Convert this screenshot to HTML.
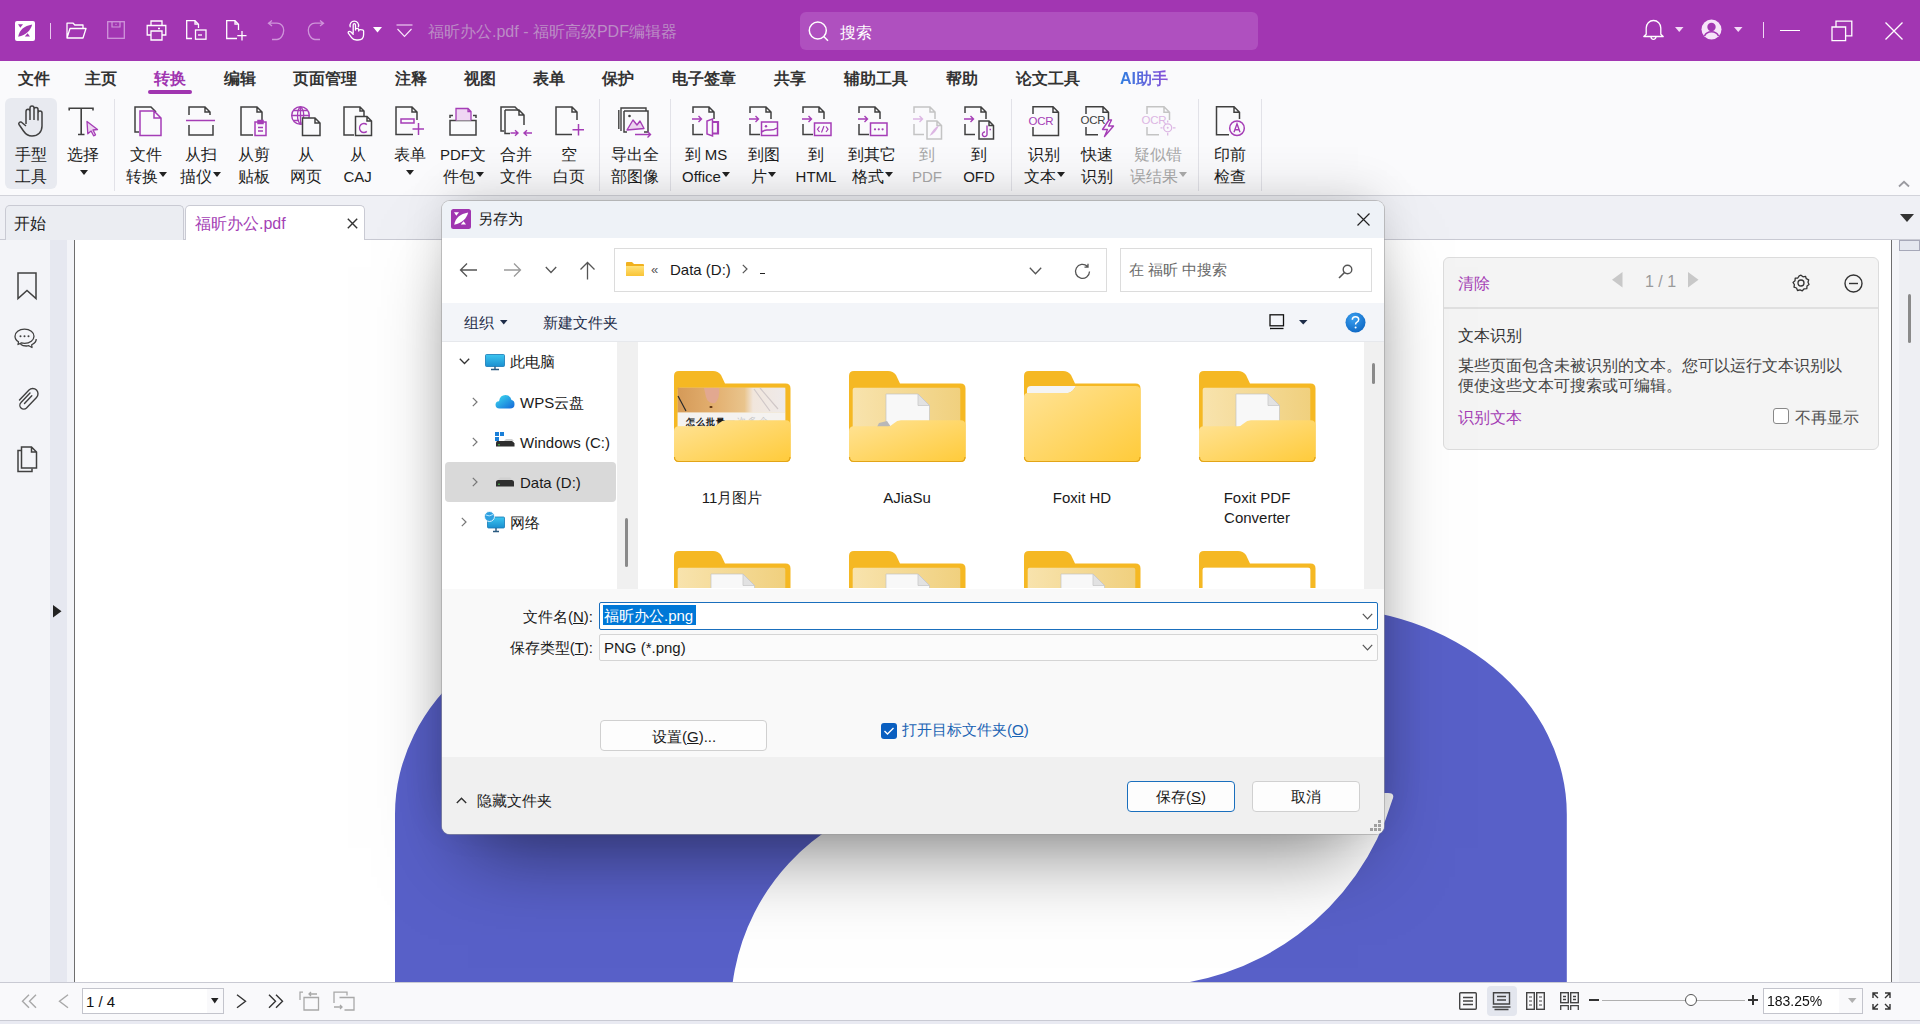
<!DOCTYPE html>
<html><head><meta charset="utf-8"><style>
*{margin:0;padding:0;box-sizing:border-box}
html,body{width:1920px;height:1024px;overflow:hidden;background:#fff;font-family:"Liberation Sans",sans-serif;color:#222}
.a{position:absolute}
svg{position:absolute;overflow:visible}
.t{position:absolute;white-space:nowrap;line-height:1}
.ri{position:absolute;top:144px;width:80px;text-align:center;font-size:16px;line-height:22px;color:#1e1e1e;white-space:nowrap}
.ri.dis{color:#a8a8a8}
.car{display:inline-block;width:0;height:0;border-left:4.5px solid transparent;border-right:4.5px solid transparent;border-top:5px solid #222;vertical-align:middle;margin-left:1px;position:relative;top:-3px}
.dis .car{border-top-color:#aaa}
.lt{font-size:15px}
.sep{position:absolute;top:99px;width:1px;height:92px;background:#e2e2e8}
.mi{position:absolute;top:70px;font-size:16px;line-height:18px;color:#333;white-space:nowrap;font-weight:bold;letter-spacing:0px}
</style></head><body>
<div class="a" style="left:0;top:0;width:1920px;height:61px;background:#a236b2"></div>
<svg style="left:15px;top:21px" width="20" height="20" viewBox="0 0 20 20" ><rect x="0" y="0" width="20" height="20" rx="2" fill="#fff"/><path d="M3 3.2H8L5.3 6.8Z" fill="#a236b2"/><path d="M3.2 15.8C4.5 9 9 5 17.2 3.6C15.5 10 11 14 3.2 15.8Z" fill="#a236b2"/><path d="M9.8 15.6H15L12.6 12.2Z" fill="#a236b2"/></svg>
<div class="a" style="left:50px;top:23px;width:1px;height:16px;background:#e8c8ee"></div>
<svg style="left:66px;top:21px" width="21" height="19" viewBox="0 0 21 19" ><path d="M1 17V2.2H7.2L8.8 4H17V7 M1 17L4 7.5H20L17 17Z" fill="none" stroke="#fff" stroke-width="1.3" stroke-linejoin="round"/></svg>
<svg style="left:107px;top:21px" width="18" height="18" viewBox="0 0 18 18" ><rect x="0.7" y="0.7" width="16.6" height="16.6" fill="none" stroke="#cf95da" stroke-width="1.3"/><path d="M5 1V6H13V1 M8.5 3.3H9.5" fill="none" stroke="#cf95da" stroke-width="1.2"/></svg>
<svg style="left:146px;top:20px" width="21" height="21" viewBox="0 0 21 21" ><path d="M5 5V1H16V5 M5 15H1.2V5.5H19.8V15H16 M5 11H16V20H5Z M12 8.5H14" fill="none" stroke="#fff" stroke-width="1.3"/></svg>
<svg style="left:186px;top:20px" width="21" height="20" viewBox="0 0 21 20" ><path d="M6 18.5H0.7V0.7H9L12.5 4.2V8 M9 0.7V4.2H12.5" fill="none" stroke="#fff" stroke-width="1.3"/><rect x="9.5" y="10" width="10.5" height="9.2" fill="none" stroke="#fff" stroke-width="1.3"/><path d="M12 15H16" stroke="#fff" stroke-width="1.3"/></svg>
<svg style="left:226px;top:20px" width="21" height="21" viewBox="0 0 21 21" ><path d="M11 18.5H0.7V0.7H9L12.5 4.2V10 M9 0.7V4.2H12.5 M16 11V20.5 M11.3 15.7H20.5" fill="none" stroke="#fff" stroke-width="1.3"/></svg>
<svg style="left:267px;top:20px" width="18" height="21" viewBox="0 0 18 21" ><path d="M1.5 3.2H10C14 3.2 16.7 6.3 16.7 10.2C16.7 14.2 14 19.5 10 19.5H5 M5 0.5L1.5 3.2L5 6" fill="none" stroke="#cf95da" stroke-width="1.3"/></svg>
<svg style="left:307px;top:20px" width="18" height="21" viewBox="0 0 18 21" ><path d="M16.5 3.2H8C4 3.2 1.3 6.3 1.3 10.2C1.3 14.2 4 19.5 8 19.5H13 M13 0.5L16.5 3.2L13 6" fill="none" stroke="#cf95da" stroke-width="1.3"/></svg>
<svg style="left:347px;top:20px" width="18" height="21" viewBox="0 0 18 21" ><path d="M3.2 6.8A4.3 4.3 0 1 1 11.4 6.8 M6.2 13V5Q6.2 3.6 7.3 3.6Q8.5 3.6 8.5 5V10 M8.5 10V9.6Q8.5 8.3 10 8.3Q11.7 8.3 11.7 9.6V11 M11.7 11V10.8Q11.7 9.6 13.3 9.6Q16.6 9.6 16.6 11V14.8Q16.6 20 11 20H9.5Q6.2 20 4.6 17.6L1.3 13.2Q0.8 12.2 1.7 11.6Q2.7 11 3.7 11.8L6.2 14.2" fill="none" stroke="#fff" stroke-width="1.3" stroke-linejoin="round" stroke-linecap="round"/></svg>
<svg style="left:373px;top:27px" width="9" height="6" viewBox="0 0 9 6" ><path d="M0 0H9L4.5 5.5Z" fill="#fff"/></svg>
<svg style="left:396px;top:24px" width="17" height="14" viewBox="0 0 17 14" ><path d="M0.5 1H16.5 M1.5 5L8.5 12.5L15.5 5" fill="none" stroke="#fae8fc" stroke-width="1.1"/></svg>
<div class="t" style="left:428px;top:24px;font-size:16px;color:#bb8cc5;line-height:16px">福昕办公.pdf - 福昕高级PDF编辑器</div>
<div class="a" style="left:800px;top:12px;width:458px;height:38px;border-radius:6px;background:#af50bf"></div>
<svg style="left:808px;top:21px" width="22" height="21" viewBox="0 0 22 21" ><circle cx="9.8" cy="9.5" r="8.5" fill="none" stroke="#fff" stroke-width="1.5"/><path d="M15.8 15.5L20 19.8" stroke="#fff" stroke-width="1.5"/></svg>
<div class="t" style="left:840px;top:24.5px;font-size:16px;color:#fff;line-height:16px">搜索</div>
<svg style="left:1643px;top:19px" width="21" height="21" viewBox="0 0 21 21" ><path d="M3.2 15.3V9C3.2 5 6.3 1.5 10.5 1.5C14.7 1.5 17.8 5 17.8 9V15.3L20.2 17.5H0.8Z M8 17.8A2.5 2.5 0 0 0 13 17.8" fill="none" stroke="#fff" stroke-width="1.3" stroke-linejoin="round"/></svg>
<svg style="left:1675px;top:27px" width="9" height="6" viewBox="0 0 9 6" ><path d="M0 0H8.5L4.25 5Z" fill="#f3dcf7"/></svg>
<svg style="left:1701px;top:19px" width="22" height="21" viewBox="0 0 22 21" ><circle cx="10.5" cy="10.5" r="10" fill="#f6e4f9"/><circle cx="10.5" cy="8" r="4.2" fill="#a236b2"/><path d="M3.5 17C5 13.8 7.5 12.8 10.5 12.8C13.5 12.8 16 13.8 17.5 17" fill="none" stroke="#a236b2" stroke-width="1.6"/></svg>
<svg style="left:1734px;top:27px" width="9" height="6" viewBox="0 0 9 6" ><path d="M0 0H8.5L4.25 5Z" fill="#f3dcf7"/></svg>
<div class="a" style="left:1763px;top:22px;width:1.3px;height:16px;background:#f0d8f4"></div>
<div class="a" style="left:1780px;top:29.5px;width:20px;height:1.3px;background:#fff"></div>
<svg style="left:1831px;top:20px" width="22" height="22" viewBox="0 0 22 22" ><path d="M1 7H14.6V20.6H1Z M5 7V1.2H20.8V15.8H14.6" fill="none" stroke="#fff" stroke-width="1.3"/></svg>
<svg style="left:1885px;top:22px" width="18" height="18" viewBox="0 0 18 18" ><path d="M0.5 0.5L17.5 17.5 M17.5 0.5L0.5 17.5" stroke="#fff" stroke-width="1.3"/></svg>
<div class="a" style="left:0;top:61px;width:1920px;height:134px;background:#fafafc"></div>
<div class="a" style="left:0;top:195px;width:1920px;height:1px;background:#d2d3da"></div>
<div class="mi" style="left:17.0px;width:34px;text-align:center;color:#333">文件</div>
<div class="mi" style="left:84.0px;width:34px;text-align:center;color:#333">主页</div>
<div class="mi" style="left:153.0px;width:34px;text-align:center;color:#a035b0">转换</div>
<div class="mi" style="left:222.5px;width:34px;text-align:center;color:#333">编辑</div>
<div class="mi" style="left:291.0px;width:68px;text-align:center;color:#333">页面管理</div>
<div class="mi" style="left:394.0px;width:34px;text-align:center;color:#333">注释</div>
<div class="mi" style="left:463.0px;width:34px;text-align:center;color:#333">视图</div>
<div class="mi" style="left:532.0px;width:34px;text-align:center;color:#333">表单</div>
<div class="mi" style="left:601.0px;width:34px;text-align:center;color:#333">保护</div>
<div class="mi" style="left:670.0px;width:68px;text-align:center;color:#333">电子签章</div>
<div class="mi" style="left:773.0px;width:34px;text-align:center;color:#333">共享</div>
<div class="mi" style="left:842.0px;width:68px;text-align:center;color:#333">辅助工具</div>
<div class="mi" style="left:945.0px;width:34px;text-align:center;color:#333">帮助</div>
<div class="mi" style="left:1013.5px;width:68px;text-align:center;color:#333">论文工具</div>
<div class="mi" style="left:1120px;width:48px;background:linear-gradient(90deg,#2f7ee0,#8a4fd8);-webkit-background-clip:text;background-clip:text;color:transparent">AI助手</div>
<div class="a" style="left:148px;top:90px;width:44px;height:4px;border-radius:2px;background:#a035b0"></div>
<div class="a" style="left:5px;top:98px;width:52px;height:91px;border-radius:6px;background:#e8eaf0"></div>
<div class="sep" style="left:114.0px"></div>
<div class="sep" style="left:599.0px"></div>
<div class="sep" style="left:669.5px"></div>
<div class="sep" style="left:1011.0px"></div>
<div class="sep" style="left:1198.0px"></div>
<div class="sep" style="left:1260.5px"></div>
<div class="ri" style="left:-9px">手型<br>工具</div>
<div class="ri" style="left:43px">选择<br><span class="car" style="top:-5px"></span></div>
<div class="ri" style="left:106px">文件<br>转换<span class="car"></span></div>
<div class="ri" style="left:160.5px">从扫<br>描仪<span class="car"></span></div>
<div class="ri" style="left:213.5px">从剪<br>贴板</div>
<div class="ri" style="left:266px">从<br>网页</div>
<div class="ri" style="left:317.6px">从<br><span class="lt">CAJ</span></div>
<div class="ri" style="left:369.7px">表单<br><span class="car" style="top:-5px"></span></div>
<div class="ri" style="left:423px"><span class="lt">PDF</span>文<br>件包<span class="car"></span></div>
<div class="ri" style="left:476px">合并<br>文件</div>
<div class="ri" style="left:529px">空<br>白页</div>
<div class="ri" style="left:595px">导出全<br>部图像</div>
<div class="ri" style="left:666px">到<span class="lt"> MS</span><br><span class="lt">Office</span><span class="car"></span></div>
<div class="ri" style="left:723.6px">到图<br>片<span class="car"></span></div>
<div class="ri" style="left:776px">到<br><span class="lt">HTML</span></div>
<div class="ri" style="left:832px">到其它<br>格式<span class="car"></span></div>
<div class="ri dis" style="left:887px">到<br><span class="lt">PDF</span></div>
<div class="ri" style="left:939px">到<br><span class="lt">OFD</span></div>
<div class="ri" style="left:1004px">识别<br>文本<span class="car"></span></div>
<div class="ri" style="left:1057px">快速<br>识别</div>
<div class="ri dis" style="left:1118px">疑似错<br>误结果<span class="car"></span></div>
<div class="ri" style="left:1190px">印前<br>检查</div>
<svg style="left:17px;top:105px" width="30" height="32" viewBox="0 0 30 32" ><path d="M9 19V6.5C9 5 10 4.2 11 4.2C12 4.2 13 5 13 6.5V15 M13 15V3C13 1.7 14 1 15 1C16 1 17 1.7 17 3V15 M17 15V4.5C17 3.2 18 2.5 19 2.5C20 2.5 21 3.2 21 4.5V15.5 M21 15.5V8C21 6.7 22 6 23 6C24 6 25 6.7 25 8V21C25 27 21 31 15 31C11 31 8.5 29 6.5 26L2 19.5C1.2 18.2 2.8 16.2 4.5 17.2L9 21" fill="none" stroke="#404040" stroke-width="1.5" stroke-linejoin="round"/></svg>
<svg style="left:68px;top:106px" width="32" height="32" viewBox="0 0 32 32" ><path d="M1.2 4.5V2.3H25V4.5 M13.2 2.3V28.5 M10 28.5H16.5" fill="none" stroke="#404040" stroke-width="1.6"/><path d="M19 15.5L29.5 23.5L25 24L27.5 28.8L25.6 29.8L23.1 25L19.8 27.8Z" fill="#ecd3f0" stroke="#a53db6" stroke-width="1.3" stroke-linejoin="round"/></svg>
<svg style="left:134px;top:106px" width="28" height="30" viewBox="0 0 28 30" ><path d="M5 26H1V1H17L22 6" fill="none" stroke="#404040" stroke-width="1.5"/><path d="M6 5H20L27 12V29.5H6Z M20 5V12H27" fill="none" stroke="#a53db6" stroke-width="1.5"/></svg>
<svg style="left:186px;top:106px" width="30" height="30" viewBox="0 0 30 30" ><path d="M3 9V1H19L24 6V9 M19 1V6H24 M3 19V29H27V19" fill="none" stroke="#404040" stroke-width="1.5"/><path d="M0 14.5H29" stroke="#a53db6" stroke-width="1.5"/></svg>
<svg style="left:240px;top:106px" width="28" height="30" viewBox="0 0 28 30" ><path d="M13 29H1V1H17L22 6V14 M17 1V6H22" fill="none" stroke="#404040" stroke-width="1.5"/><path d="M15 16H26V29.5H15Z M18 14.5H23V17.5H18Z M18 21.5H23 M18 25H23" fill="none" stroke="#a53db6" stroke-width="1.5"/></svg>
<svg style="left:291px;top:106px" width="30" height="30" viewBox="0 0 30 30" ><circle cx="9.5" cy="9.5" r="8.8" fill="none" stroke="#a53db6" stroke-width="1.4"/><path d="M0.7 9.5H18.3 M9.5 0.7V18.3 M2.5 4.5H16.5 M2.5 14.5H8 M9.5 0.7C5.5 4 5.5 15 9.5 18.3 M9.5 0.7C13.5 4 13.5 12 11 17" fill="none" stroke="#a53db6" stroke-width="1.3"/><path d="M11.5 12H24L29 17V29.5H11.5Z M24 12V17H29" fill="#fafafc" stroke="#404040" stroke-width="1.5"/></svg>
<svg style="left:343px;top:106px" width="29" height="30" viewBox="0 0 29 30" ><path d="M11 29H1V1H17L21 5V10 M17 1V5H21" fill="none" stroke="#404040" stroke-width="1.5"/><path d="M12.5 10.5H24L28.5 15V29.5H12.5Z M24 10.5V15H28.5" fill="none" stroke="#404040" stroke-width="1.5"/><path d="M23.8 18.6A4.3 4.6 0 1 0 23.8 25.4" fill="none" stroke="#a53db6" stroke-width="1.5"/></svg>
<svg style="left:395px;top:106px" width="30" height="30" viewBox="0 0 30 30" ><path d="M18 28.5H1V1H17L22 6V14 M17 1V6H22" fill="none" stroke="#404040" stroke-width="1.5"/><path d="M6 13H19V17H6Z M23.5 17V29 M17.5 23H29" fill="none" stroke="#a53db6" stroke-width="1.5"/></svg>
<svg style="left:449px;top:106px" width="28" height="30" viewBox="0 0 28 30" ><path d="M1 12V9.5H4 M24 9.5H27V12 M1 14.5H27V29H1Z" fill="none" stroke="#404040" stroke-width="1.5"/><path d="M7 14.5V2.5H19L22 5.5V14.5 M19 2.5V5.5H22" fill="#efd6f3" stroke="#a53db6" stroke-width="1.3"/></svg>
<svg style="left:500px;top:106px" width="33" height="30" viewBox="0 0 33 30" ><path d="M4 25H1V1H15L19 5" fill="none" stroke="#404040" stroke-width="1.5"/><path d="M5 4H19L24 9V19 M19 4V9H24 M5 4V27.5H10" fill="none" stroke="#404040" stroke-width="1.5"/><path d="M10.5 27H18 M15 24.3L18 27L15 29.7 M32 27H24 M27 24.3L24 27L27 29.7" fill="none" stroke="#a53db6" stroke-width="1.4"/></svg>
<svg style="left:555px;top:106px" width="29" height="30" viewBox="0 0 29 30" ><path d="M17 28.5H1V1H17L22 6V14 M17 1V6H22" fill="none" stroke="#404040" stroke-width="1.5"/><path d="M23.5 18V29.5 M17.5 23.7H29" fill="none" stroke="#a53db6" stroke-width="1.5"/></svg>
<svg style="left:618px;top:106px" width="34" height="30" viewBox="0 0 34 30" ><path d="M3 25V2H28V5 M0.8 23V4" fill="none" stroke="#404040" stroke-width="1.4"/><path d="M6 5H30V26H26 M6 5V26H9" fill="none" stroke="#404040" stroke-width="1.5"/><path d="M9 24L15 14L19 19L22 15L26 22.5Z" fill="#ecd3f0" stroke="#a53db6" stroke-width="1.4" stroke-linejoin="round"/><circle cx="11.5" cy="10" r="1.3" fill="#404040"/><path d="M17 28.5H32.5 M29.5 25.5L32.5 28.5L29.5 31.5" fill="none" stroke="#a53db6" stroke-width="1.4"/></svg>
<svg style="left:692px;top:106px" width="30" height="34" viewBox="0 0 30 34" ><path d="M1 7V1H17L22 6V13 M17 1V6H22 M1 18V28.5H11" fill="none" stroke="#404040" stroke-width="1.5"/><path d="M0 13H9.5 M6.5 10L9.5 13L6.5 16" fill="none" stroke="#a53db6" stroke-width="1.4"/><path d="M15 15V28L20.5 30V13Z" fill="none" stroke="#a53db6" stroke-width="1.5"/><path d="M20 16H26V27.5H20" fill="none" stroke="#a53db6" stroke-width="2.2"/></svg>
<svg style="left:749px;top:106px" width="30" height="34" viewBox="0 0 30 34" ><path d="M1 7V1H17L22 6V13 M17 1V6H22 M1 18V28.5H11" fill="none" stroke="#404040" stroke-width="1.5"/><path d="M0 13H9.5 M6.5 10L9.5 13L6.5 16" fill="none" stroke="#a53db6" stroke-width="1.4"/><path d="M12.5 16H28.5V29.5H12.5Z M13 26C17 21 21 27 28 22" fill="none" stroke="#a53db6" stroke-width="1.5"/><circle cx="17" cy="20.3" r="1.2" fill="#a53db6"/></svg>
<svg style="left:802px;top:106px" width="30" height="34" viewBox="0 0 30 34" ><path d="M1 7V1H17L22 6V13 M17 1V6H22 M1 18V28.5H11" fill="none" stroke="#404040" stroke-width="1.5"/><path d="M0 13H9.5 M6.5 10L9.5 13L6.5 16" fill="none" stroke="#a53db6" stroke-width="1.4"/><path d="M12.5 17H29V29.5H12.5Z" fill="none" stroke="#a53db6" stroke-width="1.5"/><path d="M17.5 20.5L15.5 23.3L17.5 26 M24 20.5L26 23.3L24 26 M22 20L19.5 26.5" fill="none" stroke="#a53db6" stroke-width="1.2"/></svg>
<svg style="left:858px;top:106px" width="30" height="34" viewBox="0 0 30 34" ><path d="M1 7V1H17L22 6V13 M17 1V6H22 M1 18V28.5H11" fill="none" stroke="#404040" stroke-width="1.5"/><path d="M0 13H9.5 M6.5 10L9.5 13L6.5 16" fill="none" stroke="#a53db6" stroke-width="1.4"/><path d="M12.5 17H29V29.5H12.5Z" fill="none" stroke="#a53db6" stroke-width="1.5"/><circle cx="17" cy="23.3" r="1.1" fill="#a53db6"/><circle cx="20.8" cy="23.3" r="1.1" fill="#a53db6"/><circle cx="24.6" cy="23.3" r="1.1" fill="#a53db6"/></svg>
<svg style="left:913px;top:106px" width="30" height="34" viewBox="0 0 30 34" ><path d="M1 7V1H17L22 6V13 M17 1V6H22 M1 18V28.5H11" fill="none" stroke="#c4c4c4" stroke-width="1.5"/><path d="M0 13H9.5 M6.5 10L9.5 13L6.5 16" fill="none" stroke="#dcb6e3" stroke-width="1.4"/><path d="M14 15H24L28.5 19.5V33H14Z M24 15V19.5H28.5" fill="none" stroke="#c4c4c4" stroke-width="1.5"/><path d="M16.5 30C19 25 22 21 26 19.5C24 24 21 28 16.5 30Z" fill="#dcb6e3"/></svg>
<svg style="left:964px;top:106px" width="30" height="34" viewBox="0 0 30 34" ><path d="M1 7V1H17L22 6V13 M17 1V6H22 M1 18V28.5H11" fill="none" stroke="#404040" stroke-width="1.5"/><path d="M0 13H9.5 M6.5 10L9.5 13L6.5 16" fill="none" stroke="#a53db6" stroke-width="1.4"/><path d="M15 15H25L29.5 19.5V33H15Z M25 15V19.5H29.5" fill="none" stroke="#404040" stroke-width="1.5"/><path d="M23 19.5V28.5A2.3 2.3 0 1 1 21 26 M25.5 23.5H27" fill="none" stroke="#a53db6" stroke-width="1.4"/></svg>
<svg style="left:1028px;top:106px" width="32" height="31" viewBox="0 0 32 31" ><path d="M5 8V0.8H25L30.5 6.3V29.5H5V21 M25 0.8V6.3H30.5" fill="none" stroke="#404040" stroke-width="1.5"/><rect x="0" y="9" width="27" height="11" fill="#fafafc"/><text x="0.5" y="19.2" font-family="Liberation Sans" font-size="11.5" fill="#a53db6" letter-spacing="-0.3">OCR</text></svg>
<svg style="left:1080px;top:106px" width="35" height="31" viewBox="0 0 35 31" ><path d="M6 8V0.8H23L28.5 6.3V14 M23 0.8V6.3H28.5 M6 21V28.8H18" fill="none" stroke="#404040" stroke-width="1.5"/><rect x="0" y="8" width="27" height="11" fill="#fafafc"/><text x="0.5" y="17.8" font-family="Liberation Sans" font-size="11.5" fill="#404040" letter-spacing="-0.3">OCR</text><path d="M29 14L22.5 23.5H27.5L24.5 30.5L33.5 20H28.5L31.5 14Z" fill="none" stroke="#a53db6" stroke-width="1.4" stroke-linejoin="round"/></svg>
<svg style="left:1141px;top:106px" width="35" height="31" viewBox="0 0 35 31" ><path d="M6 8V0.8H23L28.5 6.3V14 M23 0.8V6.3H28.5 M6 21V28.8H18" fill="none" stroke="#c4c4c4" stroke-width="1.5"/><rect x="0" y="8" width="27" height="11" fill="#fafafc"/><text x="0.5" y="17.8" font-family="Liberation Sans" font-size="11.5" fill="#dcb6e3" letter-spacing="-0.3">OCR</text><circle cx="26.7" cy="21.8" r="4" fill="none" stroke="#dcb6e3" stroke-width="1.3"/><path d="M26.7 14.5V16.5 M26.7 27V29.5 M19.5 21.8H21.5 M32 21.8H34.5" stroke="#dcb6e3" stroke-width="1.3"/><circle cx="26.7" cy="21.8" r="1" fill="#dcb6e3"/></svg>
<svg style="left:1215px;top:106px" width="31" height="31" viewBox="0 0 31 31" ><path d="M14 28.8H1.5V0.8H19L24.5 6.3V13 M19 0.8V6.3H24.5" fill="none" stroke="#404040" stroke-width="1.5"/><circle cx="22" cy="22.2" r="7.3" fill="none" stroke="#a53db6" stroke-width="1.5"/><path d="M19 26.3L22 17.8L25 26.3 M20 23.7H24" fill="none" stroke="#a53db6" stroke-width="1.4"/></svg>
<svg style="left:1898px;top:180px" width="12" height="8" viewBox="0 0 12 8" ><path d="M1 6.5L6 1.8L11 6.5" fill="none" stroke="#9a9aa0" stroke-width="1.8"/></svg>
<div class="a" style="left:0;top:196px;width:1920px;height:44px;background:#eff0f5"></div>
<div class="a" style="left:0;top:239px;width:1920px;height:1px;background:#c9cad3"></div>
<div class="a" style="left:5px;top:205px;width:179px;height:35px;background:#ebedf2;border:1px solid #c9cad3;border-bottom:none;border-radius:5px 5px 0 0"></div>
<div class="t" style="left:14px;top:216px;font-size:16px;color:#222;line-height:16px">开始</div>
<div class="a" style="left:185px;top:205px;width:180px;height:35px;background:#fff;border:1px solid #c9cad3;border-bottom:none;border-radius:5px 5px 0 0"></div>
<div class="t" style="left:195px;top:216px;font-size:16px;color:#a43fb5;line-height:16px">福昕办公.pdf</div>
<svg style="left:347px;top:218px" width="11" height="11" viewBox="0 0 11 11" ><path d="M0.8 0.8L10.2 10.2M10.2 0.8L0.8 10.2" stroke="#333" stroke-width="1.4"/></svg>
<svg style="left:1900px;top:214px" width="15" height="9" viewBox="0 0 15 9" ><path d="M0 0H14L7 8Z" fill="#333"/></svg>
<div class="a" style="left:0;top:240px;width:74px;height:742px;background:#f3f4f8"></div>
<div class="a" style="left:50px;top:240px;width:17px;height:742px;background:#e6e8f0"></div>
<div class="a" style="left:74px;top:240px;width:1px;height:742px;background:#6e6e6e"></div>
<svg style="left:17px;top:272px" width="20" height="28" viewBox="0 0 20 28" ><path d="M1 1H19V26.5L10 18.5L1 26.5Z" fill="none" stroke="#404040" stroke-width="1.5"/></svg>
<svg style="left:14px;top:328px" width="24" height="24" viewBox="0 0 24 24" ><path d="M10.5 1.2C5 1.2 1 4.4 1 8.2C1 10.6 2.4 12.5 4.5 13.8L4 16.5L7.5 14.9C8.5 15.2 9.5 15.3 10.5 15.3C16 15.3 20 12 20 8.2C20 4.4 16 1.2 10.5 1.2Z M6.5 16.2C8 17.4 10 18 12.3 18C13.2 18 14 17.9 14.8 17.7L18 19.5L17.7 16.8C19.7 15.7 22.5 14 22.2 11" fill="none" stroke="#404040" stroke-width="1.3" stroke-linejoin="round"/><circle cx="6.5" cy="8.3" r="1" fill="#404040"/><circle cx="10.5" cy="8.3" r="1" fill="#404040"/><circle cx="14.5" cy="8.3" r="1" fill="#404040"/></svg>
<svg style="left:17px;top:387px" width="22" height="24" viewBox="0 0 22 24" ><path d="M13 6L4 15.5C2.5 17 2.5 19.5 4 21C5.5 22.5 8 22.5 9.5 21L19.5 10.5C21.5 8.5 21.5 5 19.5 3C17.5 1 14 1 12 3L2.5 13 M14.8 8.8L7.5 16.5" fill="none" stroke="#404040" stroke-width="1.4" stroke-linecap="round"/></svg>
<svg style="left:17px;top:446px" width="21" height="27" viewBox="0 0 21 27" ><path d="M4 4.5H1V25.5H15V22.5" fill="none" stroke="#404040" stroke-width="1.5"/><path d="M4.5 1H14.5L19.5 6V22H4.5Z M14.5 1V6H19.5" fill="none" stroke="#404040" stroke-width="1.5"/></svg>
<svg style="left:53px;top:605px" width="9" height="13" viewBox="0 0 9 13" ><path d="M0 0L8.5 6.3L0 12.6Z" fill="#222"/></svg>
<div class="a" style="left:75px;top:240px;width:1816px;height:742px;background:#fff;overflow:hidden"><svg style="left:0;top:0" width="1816" height="742" viewBox="75 240 1816 742"><path d="M395 990V814.2A249.6 207.2 0 0 1 644.6 607H1317.2A249.6 207.2 0 0 1 1566.8 814.2V990Z" fill="#5860c8"/><path d="M1000 805L1386 793Q1396 792 1392.3 800A261.85 261.85 0 0 1 1141.5 986.5L1141.5 1030L731.6 1030A217.9 217.9 0 0 1 835.7 825Z" fill="#fff"/></svg></div>
<div class="a" style="left:1891px;top:240px;width:1px;height:742px;background:#6e6e6e"></div>
<div class="a" style="left:1892px;top:240px;width:28px;height:742px;background:#eeeff3"></div>
<div class="a" style="left:1892px;top:240px;width:7px;height:742px;background:#f4f5f8"></div>
<div class="a" style="left:1899px;top:240px;width:21px;height:11px;background:#e4e7ef;border:1px solid #a6a8b8"></div>
<div class="a" style="left:1908px;top:294px;width:3px;height:49px;border-radius:1.5px;background:#8a8a8a"></div>
<div class="a" style="left:1443px;top:257px;width:436px;height:193px;background:#f4f4f4;border:1px solid #dcdcdc;border-radius:6px"></div>
<div class="a" style="left:1444px;top:307px;width:434px;height:2px;background:#e0e0e0"></div>
<div class="t" style="left:1458px;top:276px;font-size:16px;color:#a43fb5;line-height:16px">清除</div>
<svg style="left:1612px;top:272px" width="11" height="16" viewBox="0 0 11 16" ><path d="M10.5 0V15.5L0 7.75Z" fill="#c8c8c8"/></svg>
<div class="t" style="left:1645px;top:274px;font-size:16px;color:#9a9a9a;line-height:16px">1 / 1</div>
<svg style="left:1688px;top:272px" width="11" height="16" viewBox="0 0 11 16" ><path d="M0 0V15.5L10.5 7.75Z" fill="#c8c8c8"/></svg>
<svg style="left:1792px;top:274px" width="18" height="18" viewBox="0 0 18 18" ><circle cx="9" cy="9" r="3" fill="none" stroke="#333" stroke-width="1.3"/><path d="M9 1.2L11 2.8L13.5 2.3L14.3 4.7L16.7 5.8L16 8.3L17 10.5L15 12.1L14.8 14.7L12.2 14.8L10.3 16.8L8 15.8L5.5 16.5L4.5 14L2 13.2L2.4 10.6L1 8.5L3 6.8L3.2 4.2L5.8 4L7.2 1.8Z" fill="none" stroke="#333" stroke-width="1.3" stroke-linejoin="round"/></svg>
<svg style="left:1844px;top:274px" width="19" height="19" viewBox="0 0 19 19" ><circle cx="9.5" cy="9.5" r="8.5" fill="none" stroke="#333" stroke-width="1.4"/><path d="M5 9.5H14" stroke="#333" stroke-width="1.4"/></svg>
<div class="t" style="left:1458px;top:328px;font-size:16px;color:#333;line-height:16px">文本识别</div>
<div class="t" style="left:1458px;top:356px;width:400px;font-size:16px;line-height:20px;color:#444;white-space:normal">某些页面包含未被识别的文本。您可以运行文本识别以<br>便使这些文本可搜索或可编辑。</div>
<div class="t" style="left:1458px;top:410px;font-size:16px;color:#a43fb5;line-height:16px">识别文本</div>
<div class="a" style="left:1773px;top:408px;width:16px;height:16px;border:1px solid #888;border-radius:3px;background:#fff"></div>
<div class="t" style="left:1795px;top:410px;font-size:16px;color:#555;line-height:16px">不再显示</div>
<div class="a" style="left:0;top:982px;width:1920px;height:42px;background:#f9f9fb;border-top:1px solid #c9cad3"></div>
<div class="a" style="left:0;top:1020px;width:1920px;height:4px;background:#e9eaf2;border-top:1px solid #c9cad3"></div>
<svg style="left:21px;top:994px" width="16" height="15" viewBox="0 0 16 15" ><path d="M8 0.7L1.5 7.2L8 13.7 M15 0.7L8.5 7.2L15 13.7" fill="none" stroke="#a8a8a8" stroke-width="1.4"/></svg>
<svg style="left:58px;top:994px" width="11" height="15" viewBox="0 0 11 15" ><path d="M10 0.7L1.5 7.2L10 13.7" fill="none" stroke="#a8a8a8" stroke-width="1.4"/></svg>
<div class="a" style="left:82px;top:988px;width:142px;height:26px;background:#fff;border:1px solid #c3c4cc"></div>
<div class="a" style="left:207px;top:989px;width:16px;height:24px;background:#f9f9fb"></div>
<div class="t" style="left:86px;top:994px;font-size:15px;color:#111;line-height:15px">1 / 4</div>
<svg style="left:211px;top:998px" width="8" height="6" viewBox="0 0 8 6" ><path d="M0 0H7.5L3.75 5.5Z" fill="#222"/></svg>
<svg style="left:236px;top:994px" width="11" height="15" viewBox="0 0 11 15" ><path d="M1 0.7L9.5 7.2L1 13.7" fill="none" stroke="#333" stroke-width="1.4"/></svg>
<svg style="left:268px;top:994px" width="16" height="15" viewBox="0 0 16 15" ><path d="M1 0.7L7.5 7.2L1 13.7 M8 0.7L14.5 7.2L8 13.7" fill="none" stroke="#333" stroke-width="1.4"/></svg>
<svg style="left:299px;top:991px" width="21" height="20" viewBox="0 0 21 20" ><path d="M1 9V1.2H4 M5 6.5H19.5V19H5Z M10 3H18 M12 1L10 3L12 5" fill="none" stroke="#a8a8a8" stroke-width="1.3"/></svg>
<svg style="left:333px;top:991px" width="22" height="20" viewBox="0 0 22 20" ><path d="M1 12V1.2H14V4.5 M6.5 6.5H21V19H11.5 M1 16H9 M7 14L9 16L7 18" fill="none" stroke="#a8a8a8" stroke-width="1.3"/></svg>
<div class="a" style="left:1487px;top:986px;width:30px;height:30px;border-radius:4px;background:#e3e6ee"></div>
<svg style="left:1459px;top:992px" width="18" height="18" viewBox="0 0 18 18" ><rect x="0.7" y="0.7" width="16.6" height="16.6" rx="1" fill="none" stroke="#444" stroke-width="1.4"/><path d="M4 5.5H14M4 9H14M4 12.5H14" stroke="#444" stroke-width="1.3"/></svg>
<svg style="left:1492px;top:992px" width="19" height="18" viewBox="0 0 19 18" ><path d="M1.5 0.7H17.5V12H1.5Z M5 4.5H14M5 8H14 M0.5 15H18.5 M2.5 17.5H16.5" fill="none" stroke="#444" stroke-width="1.4"/></svg>
<svg style="left:1526px;top:992px" width="19" height="18" viewBox="0 0 19 18" ><rect x="0.7" y="0.7" width="7.6" height="16.6" fill="none" stroke="#444" stroke-width="1.4"/><rect x="10.7" y="0.7" width="7.6" height="16.6" fill="none" stroke="#444" stroke-width="1.4"/><path d="M3 5H6M3 9H6M3 13H6M13 5H16M13 9H16M13 13H16" stroke="#444" stroke-width="1.2"/></svg>
<svg style="left:1560px;top:992px" width="19" height="18" viewBox="0 0 19 18" ><rect x="0.7" y="0.7" width="7.6" height="10" fill="none" stroke="#444" stroke-width="1.4"/><rect x="10.7" y="0.7" width="7.6" height="10" fill="none" stroke="#444" stroke-width="1.4"/><path d="M0.7 18V13.7H8.3V18 M10.7 18V13.7H18.3V18 M3 4.5H6M3 7.5H6M13 4.5H16M13 7.5H16" fill="none" stroke="#444" stroke-width="1.3"/></svg>
<div class="a" style="left:1589px;top:999px;width:10px;height:2px;background:#333"></div>
<div class="a" style="left:1602px;top:999.5px;width:143px;height:1.5px;background:#b0b0b0"></div>
<div class="a" style="left:1685px;top:994px;width:12px;height:12px;border-radius:50%;background:#fff;border:1.3px solid #555"></div>
<div class="a" style="left:1748px;top:999px;width:10px;height:2px;background:#333"></div><div class="a" style="left:1752px;top:995px;width:2px;height:10px;background:#333"></div>
<div class="a" style="left:1763px;top:988px;width:100px;height:26px;background:#fff;border:1px solid #c3c4cc"></div>
<div class="a" style="left:1839px;top:989px;width:23px;height:24px;background:#f9f9fb"></div>
<div class="t" style="left:1767px;top:994px;font-size:14px;color:#111;line-height:15px;transform:scaleY(1.08);transform-origin:0 50%">183.25%</div>
<svg style="left:1848px;top:998px" width="9" height="6" viewBox="0 0 9 6" ><path d="M0 0H8.5L4.25 5Z" fill="#b0b0b0"/></svg>
<svg style="left:1872px;top:992px" width="19" height="18" viewBox="0 0 19 18" ><path d="M1 6V1H6 M1 1L6 6 M13 1H18V6 M18 1L13 6 M1 12V17H6 M1 17L6 12 M18 12V17H13 M18 17L13 12" fill="none" stroke="#333" stroke-width="1.4"/></svg>
<div class="a" style="left:442px;top:201px;width:942px;height:633px;border-radius:8px;box-shadow:0 40px 80px -26px rgba(0,0,0,0.52),0 -12px 44px -8px rgba(0,0,0,0.16)"></div>
<div class="a" style="left:441px;top:200px;width:944px;height:635px;border-radius:9px;background:#9a9a9a;opacity:0.55"></div>
<div class="a" id="dlg" style="left:442px;top:201px;width:942px;height:633px;border-radius:8px;overflow:hidden;background:#f9f9f9">
<div class="a" style="left:0px;top:0px;width:942px;height:37px;background:#eef2f7"></div>
<svg style="left:9px;top:8px" width="20" height="20" viewBox="0 0 20 20" ><rect width="20" height="20" rx="2.5" fill="#a035b0"/><path d="M3 3.2H8L5.3 6.8Z" fill="#fff"/><path d="M3.2 15.8C4.5 9 9 5 17.2 3.6C15.5 10 11 14 3.2 15.8Z" fill="#fff"/><path d="M9.8 15.6H15L12.6 12.2Z" fill="#fff"/></svg>
<div class="t" style="left:36px;top:10px;font-size:15px;line-height:15px;color:#1a1a1a">另存为</div>
<svg style="left:915px;top:12px" width="13" height="13" viewBox="0 0 13 13" ><path d="M0.5 0.5L12.5 12.5M12.5 0.5L0.5 12.5" stroke="#222" stroke-width="1.2"/></svg>
<div class="a" style="left:0px;top:37px;width:942px;height:65px;background:#ffffff"></div>
<svg style="left:17px;top:61px" width="19" height="16" viewBox="0 0 19 16" ><path d="M18 8H1.5 M8 1.5L1.5 8L8 14.5" fill="none" stroke="#555" stroke-width="1.3"/></svg>
<svg style="left:61px;top:61px" width="19" height="16" viewBox="0 0 19 16" ><path d="M1 8H17.5 M11 1.5L17.5 8L11 14.5" fill="none" stroke="#9a9a9a" stroke-width="1.3"/></svg>
<svg style="left:103px;top:65px" width="12" height="8" viewBox="0 0 12 8" ><path d="M0.8 1L6 6.5L11.2 1" fill="none" stroke="#555" stroke-width="1.3"/></svg>
<svg style="left:137px;top:60px" width="17" height="19" viewBox="0 0 17 19" ><path d="M8.5 18.5V1.5 M1.5 8.5L8.5 1.5L15.5 8.5" fill="none" stroke="#555" stroke-width="1.3"/></svg>
<div class="a" style="left:172px;top:47px;width:493px;height:44px;background:#fff;border:1px solid #dcdcdc"></div>
<svg style="left:184px;top:61px" width="18" height="14" viewBox="0 0 18 14" ><defs><linearGradient id="fy" x1="0" y1="0" x2="0" y2="1"><stop offset="0" stop-color="#ffe27a"/><stop offset="1" stop-color="#f9c436"/></linearGradient></defs><path d="M0 1Q0 0 1 0H6L8 2H17Q18 2 18 3V13Q18 14 17 14H1Q0 14 0 13Z" fill="#f1b11f"/><path d="M0 4H18V13Q18 14 17 14H1Q0 14 0 13Z" fill="url(#fy)"/></svg>
<div class="t" style="left:209px;top:61px;font-size:15px;line-height:15px;color:#555;font-size:13px">«</div>
<div class="t" style="left:228px;top:61px;font-size:15px;line-height:15px;color:#1a1a1a">Data (D:)</div>
<svg style="left:300px;top:63px" width="6" height="10" viewBox="0 0 6 10" ><path d="M0.8 0.8L5 5L0.8 9.2" fill="none" stroke="#555" stroke-width="1.2"/></svg>
<div class="a" style="left:318px;top:72px;width:5px;height:1.3px;background:#222"></div>
<svg style="left:587px;top:66px" width="13" height="8" viewBox="0 0 13 8" ><path d="M0.8 0.8L6.5 6.8L12.2 0.8" fill="none" stroke="#555" stroke-width="1.3"/></svg>
<svg style="left:632px;top:62px" width="17" height="17" viewBox="0 0 17 17" ><path d="M15.5 8.5A7 7 0 1 1 13.3 3.3 M14 0.8V4.2H10.5" fill="none" stroke="#555" stroke-width="1.3"/></svg>
<div class="a" style="left:678px;top:47px;width:252px;height:44px;background:#fff;border:1px solid #dcdcdc"></div>
<div class="t" style="left:687px;top:61px;font-size:15px;line-height:15px;color:#6a6a6a">在 福昕 中搜索</div>
<svg style="left:896px;top:63px" width="15" height="15" viewBox="0 0 15 15" ><circle cx="9.5" cy="5.5" r="4.3" fill="none" stroke="#555" stroke-width="1.4"/><path d="M6.5 8.5L1 14" stroke="#555" stroke-width="1.6"/></svg>
<div class="a" style="left:0px;top:102px;width:942px;height:39px;background:#f3f5f9"></div>
<div class="t" style="left:22px;top:114px;font-size:15px;line-height:15px;color:#1d2c48">组织</div>
<svg style="left:58px;top:119px" width="8" height="5" viewBox="0 0 8 5" ><path d="M0 0H7.5L3.75 4.5Z" fill="#1d2c48"/></svg>
<div class="t" style="left:101px;top:114px;font-size:15px;line-height:15px;color:#1d2c48">新建文件夹</div>
<svg style="left:827px;top:113px" width="16" height="16" viewBox="0 0 16 16" ><rect x="1" y="0.8" width="13.5" height="11" fill="none" stroke="#111" stroke-width="1.3"/><path d="M1 14.5H14.5" stroke="#111" stroke-width="1.3"/></svg>
<svg style="left:857px;top:119px" width="9" height="5" viewBox="0 0 9 5" ><path d="M0 0H8.5L4.25 4.5Z" fill="#1d2c48"/></svg>
<svg style="left:903px;top:111px" width="21" height="21" viewBox="0 0 21 21" ><defs><radialGradient id="hb" cx="0.4" cy="0.3" r="0.8"><stop offset="0" stop-color="#3aa0f0"/><stop offset="1" stop-color="#0a63c0"/></radialGradient></defs><circle cx="10.5" cy="10.5" r="10" fill="url(#hb)"/><path d="M7.3 7.8Q7.3 4.7 10.5 4.7Q13.7 4.7 13.7 7.6Q13.7 9.3 11.7 10.3Q10.6 10.9 10.6 12.5" fill="none" stroke="#fff" stroke-width="1.5"/><circle cx="10.6" cy="15.5" r="1" fill="#fff"/></svg>
<div class="a" style="left:0px;top:141px;width:942px;height:247px;background:#fff"></div>
<div class="a" style="left:0px;top:140px;width:942px;height:1px;background:#e6e8ec"></div>
<div class="a" style="left:175px;top:141px;width:21px;height:247px;background:#f0f0f0"></div>
<div class="a" style="left:183px;top:317px;width:3px;height:49px;background:#8a8a8a;border-radius:1.5px"></div>
<div class="a" style="left:3px;top:261px;width:171px;height:40px;background:#d9d9d9;border-radius:4px"></div>
<svg style="left:17px;top:157px" width="11" height="7" viewBox="0 0 11 7" ><path d="M0.8 0.8L5.5 5.5L10.2 0.8" fill="none" stroke="#333" stroke-width="1.3"/></svg>
<svg style="left:30px;top:196px" width="6" height="10" viewBox="0 0 6 10" ><path d="M0.8 0.8L5 5L0.8 9.2" fill="none" stroke="#777" stroke-width="1.2"/></svg>
<svg style="left:30px;top:236px" width="6" height="10" viewBox="0 0 6 10" ><path d="M0.8 0.8L5 5L0.8 9.2" fill="none" stroke="#777" stroke-width="1.2"/></svg>
<svg style="left:30px;top:276px" width="6" height="10" viewBox="0 0 6 10" ><path d="M0.8 0.8L5 5L0.8 9.2" fill="none" stroke="#777" stroke-width="1.2"/></svg>
<svg style="left:19px;top:316px" width="6" height="10" viewBox="0 0 6 10" ><path d="M0.8 0.8L5 5L0.8 9.2" fill="none" stroke="#777" stroke-width="1.2"/></svg>
<svg style="left:43px;top:153px" width="20" height="16" viewBox="0 0 20 16" ><defs><linearGradient id="mon" x1="0" y1="0" x2="0" y2="1"><stop offset="0" stop-color="#3cc6f0"/><stop offset="1" stop-color="#1a8fd0"/></linearGradient></defs><rect x="0.5" y="0.5" width="19" height="12" rx="1" fill="url(#mon)" stroke="#1779b5" stroke-width="0.8"/><path d="M6 15.5H14 M10 12.5V15.5" stroke="#2a5a80" stroke-width="1.4"/></svg>
<div class="t" style="left:68px;top:153px;font-size:15px;line-height:15px;color:#1a1a1a">此电脑</div>
<svg style="left:53px;top:193px" width="20" height="15" viewBox="0 0 20 15" ><defs><linearGradient id="cl" x1="0" y1="0" x2="1" y2="1"><stop offset="0" stop-color="#3de0f0"/><stop offset="1" stop-color="#1466d8"/></linearGradient></defs><path d="M4.5 14.5Q0.5 14.5 0.5 10.8Q0.5 7.5 4 7.2Q5 1 10.5 1Q15.5 1 16.5 6Q19.5 6.5 19.5 10.2Q19.5 14.5 15 14.5Z" fill="url(#cl)"/></svg>
<div class="t" style="left:78px;top:194px;font-size:15px;line-height:15px;color:#1a1a1a">WPS云盘</div>
<svg style="left:53px;top:231px" width="20" height="15" viewBox="0 0 20 15" ><rect x="0" y="0" width="4" height="4" fill="#1a7fd8"/><rect x="5" y="0" width="4" height="4" fill="#1a7fd8"/><rect x="0" y="5" width="4" height="4" fill="#1a7fd8"/><path d="M1 14.5V11Q1 10 2 9H17Q19 10 19.5 11.5V14.5Z" fill="#2e2e2e"/><path d="M9 9L11 7H17L19 9Z" fill="#cfcfcf"/><circle cx="4" cy="12.7" r="0.8" fill="#4ed04e"/></svg>
<div class="t" style="left:78px;top:234px;font-size:15px;line-height:15px;color:#1a1a1a">Windows (C:)</div>
<svg style="left:53px;top:276px" width="20" height="10" viewBox="0 0 20 10" ><path d="M1 9.5V5Q1 3.5 3 3H17Q19 3.5 19 5V9.5Z" fill="#2e2e2e"/><path d="M3 3L5 0.5H15L17 3Z" fill="#d0d0d0"/><circle cx="4" cy="7.3" r="0.8" fill="#4ed04e"/></svg>
<div class="t" style="left:78px;top:274px;font-size:15px;line-height:15px;color:#1a1a1a">Data (D:)</div>
<svg style="left:42px;top:310px" width="21" height="21" viewBox="0 0 21 21" ><defs><linearGradient id="nw" x1="0" y1="0" x2="0" y2="1"><stop offset="0" stop-color="#3cc6f0"/><stop offset="1" stop-color="#1a8fd0"/></linearGradient></defs><rect x="3.5" y="6" width="17" height="11" rx="1" fill="url(#nw)" stroke="#1779b5" stroke-width="0.8"/><path d="M9 20.5H15 M12 17V20.5" stroke="#2a5a80" stroke-width="1.4"/><circle cx="5.5" cy="5.5" r="5" fill="#2fa0e0" stroke="#fff" stroke-width="0.8"/><path d="M2 4Q5 6 9 3.5" stroke="#b8e8ff" stroke-width="1" fill="none"/></svg>
<div class="t" style="left:68px;top:314px;font-size:15px;line-height:15px;color:#1a1a1a">网络</div>
<div class="a" style="left:922px;top:141px;width:20px;height:247px;background:#f0f0f0"></div>
<div class="a" style="left:930px;top:162px;width:3px;height:21px;background:#8a8a8a;border-radius:1.5px"></div>
<svg style="left:232px;top:169.5px" width="117" height="91" viewBox="0 0 117 91" ><defs><linearGradient id="fg0" x1="0" y1="0" x2="1" y2="1"><stop offset="0" stop-color="#ffe397"/><stop offset="1" stop-color="#ffcb3a"/></linearGradient><linearGradient id="fg0b" x1="0" y1="0" x2="1" y2="0"><stop offset="0" stop-color="#f8e3ad"/><stop offset="1" stop-color="#f0d07e"/></linearGradient></defs><path d="M0 5Q0 0 5 0H39Q44 0 47 4L51 12.6H111.5Q116.5 12.6 116.5 17.6V86Q116.5 91 111.5 91H5Q0 91 0 86Z" fill="#f5b823"/><rect x="3.7" y="16.7" width="107.6" height="45" rx="2" fill="url(#fg0b)"/><defs><linearGradient id="ph" x1="0" y1="0" x2="1" y2="0"><stop offset="0" stop-color="#d59a58"/><stop offset="0.35" stop-color="#e3b070"/><stop offset="0.62" stop-color="#e9c48c"/><stop offset="0.7" stop-color="#f1e6dc"/><stop offset="1" stop-color="#eeeaea"/></linearGradient></defs><rect x="3.7" y="16.7" width="107.6" height="25" fill="url(#ph)"/><path d="M30 17H45Q46 28 41 32Q34 33 32 26Z" fill="#e2a890"/><path d="M80 18L96 40 M86 17L104 38" stroke="#d0c8c8" stroke-width="1.2"/><path d="M4 25L12 40" stroke="#2a2a2a" stroke-width="1.2"/><ellipse cx="37" cy="36" rx="1.6" ry="1" fill="#5a3010"/><rect x="3.7" y="41.5" width="107.6" height="14" fill="#f4f2f0"/><text x="12" y="53.5" font-size="9" font-weight="bold" fill="#1a1a1a" letter-spacing="1" font-family="Liberation Sans">怎么批量</text><text x="52" y="53" font-size="8.5" fill="#c8c8c8" letter-spacing="2" font-family="Liberation Sans">一次多个</text><path d="M0 60Q0 55.2 5 55.2H39Q42 55.2 45 52.2Q48 49.2 52 49.2H111.5Q116.5 49.2 116.5 54.2V86Q116.5 91 111.5 91H5Q0 91 0 86Z" fill="url(#fg0)"/><path d="M0.5 86Q0.5 90.5 5 90.5H111.5Q116 90.5 116 86" fill="none" stroke="#e2a417" stroke-width="1.2"/></svg>
<svg style="left:407px;top:169.5px" width="117" height="91" viewBox="0 0 117 91" ><defs><linearGradient id="fg1" x1="0" y1="0" x2="1" y2="1"><stop offset="0" stop-color="#ffe397"/><stop offset="1" stop-color="#ffcb3a"/></linearGradient><linearGradient id="fg1b" x1="0" y1="0" x2="1" y2="0"><stop offset="0" stop-color="#f8e3ad"/><stop offset="1" stop-color="#f0d07e"/></linearGradient></defs><path d="M0 5Q0 0 5 0H39Q44 0 47 4L51 12.6H111.5Q116.5 12.6 116.5 17.6V86Q116.5 91 111.5 91H5Q0 91 0 86Z" fill="#f5b823"/><rect x="3.7" y="16.7" width="107.6" height="45" rx="2" fill="url(#fg1b)"/><path d="M37 23H69L80.5 34.5V62H37Z" fill="#f8f8f8" stroke="#c4c4c4" stroke-width="0.7"/><path d="M69 23V34.5H80.5Z" fill="#e2e2e2" stroke="#c4c4c4" stroke-width="0.7"/><path d="M26 60L30 52L38 50L42 56L34 62Z" fill="#b8b8b8"/><path d="M0 60Q0 55.2 5 55.2H39Q42 55.2 45 52.2Q48 49.2 52 49.2H111.5Q116.5 49.2 116.5 54.2V86Q116.5 91 111.5 91H5Q0 91 0 86Z" fill="url(#fg1)"/><path d="M0.5 86Q0.5 90.5 5 90.5H111.5Q116 90.5 116 86" fill="none" stroke="#e2a417" stroke-width="1.2"/></svg>
<svg style="left:582px;top:169.5px" width="117" height="91" viewBox="0 0 117 91" ><defs><linearGradient id="fg2" x1="0" y1="0" x2="1" y2="1"><stop offset="0" stop-color="#ffe397"/><stop offset="1" stop-color="#ffcb3a"/></linearGradient><linearGradient id="fg2b" x1="0" y1="0" x2="1" y2="0"><stop offset="0" stop-color="#f8e3ad"/><stop offset="1" stop-color="#f0d07e"/></linearGradient></defs><path d="M0 5Q0 0 5 0H39Q44 0 47 4L51 12.6H111.5Q116.5 12.6 116.5 17.6V86Q116.5 91 111.5 91H5Q0 91 0 86Z" fill="#f5b823"/><path d="M3 19Q3 15 7 15H52Q48 22 44 22H3Z" fill="#f4f4f4"/><path d="M0 26Q0 22 4 22H44Q48 22 52 15H111.5Q116.5 15 116.5 20V86Q116.5 91 111.5 91H5Q0 91 0 86Z" fill="url(#fg2)"/><path d="M0.5 86Q0.5 90.5 5 90.5H111.5Q116 90.5 116 86" fill="none" stroke="#e2a417" stroke-width="1.2"/></svg>
<svg style="left:757px;top:169.5px" width="117" height="91" viewBox="0 0 117 91" ><defs><linearGradient id="fg3" x1="0" y1="0" x2="1" y2="1"><stop offset="0" stop-color="#ffe397"/><stop offset="1" stop-color="#ffcb3a"/></linearGradient><linearGradient id="fg3b" x1="0" y1="0" x2="1" y2="0"><stop offset="0" stop-color="#f8e3ad"/><stop offset="1" stop-color="#f0d07e"/></linearGradient></defs><path d="M0 5Q0 0 5 0H39Q44 0 47 4L51 12.6H111.5Q116.5 12.6 116.5 17.6V86Q116.5 91 111.5 91H5Q0 91 0 86Z" fill="#f5b823"/><rect x="3.7" y="16.7" width="107.6" height="45" rx="2" fill="url(#fg3b)"/><path d="M37 23H69L80.5 34.5V62H37Z" fill="#f8f8f8" stroke="#c4c4c4" stroke-width="0.7"/><path d="M69 23V34.5H80.5Z" fill="#e2e2e2" stroke="#c4c4c4" stroke-width="0.7"/><path d="M0 60Q0 55.2 5 55.2H39Q42 55.2 45 52.2Q48 49.2 52 49.2H111.5Q116.5 49.2 116.5 54.2V86Q116.5 91 111.5 91H5Q0 91 0 86Z" fill="url(#fg3)"/><path d="M0.5 86Q0.5 90.5 5 90.5H111.5Q116 90.5 116 86" fill="none" stroke="#e2a417" stroke-width="1.2"/></svg>
<div class="a" style="left:195px;top:350px;width:727px;height:37px;overflow:hidden"><svg style="left:37px;top:0px" width="117" height="91" viewBox="0 0 117 91" ><defs><linearGradient id="fg10" x1="0" y1="0" x2="1" y2="1"><stop offset="0" stop-color="#ffe397"/><stop offset="1" stop-color="#ffcb3a"/></linearGradient><linearGradient id="fg10b" x1="0" y1="0" x2="1" y2="0"><stop offset="0" stop-color="#f8e3ad"/><stop offset="1" stop-color="#f0d07e"/></linearGradient></defs><path d="M0 5Q0 0 5 0H39Q44 0 47 4L51 12.6H111.5Q116.5 12.6 116.5 17.6V86Q116.5 91 111.5 91H5Q0 91 0 86Z" fill="#f5b823"/><rect x="3.7" y="16.7" width="107.6" height="45" rx="2" fill="url(#fg10b)"/><path d="M37 23H69L80.5 34.5V62H37Z" fill="#f8f8f8" stroke="#c4c4c4" stroke-width="0.7"/><path d="M69 23V34.5H80.5Z" fill="#e2e2e2" stroke="#c4c4c4" stroke-width="0.7"/><path d="M0 60Q0 55.2 5 55.2H39Q42 55.2 45 52.2Q48 49.2 52 49.2H111.5Q116.5 49.2 116.5 54.2V86Q116.5 91 111.5 91H5Q0 91 0 86Z" fill="url(#fg10)"/><path d="M0.5 86Q0.5 90.5 5 90.5H111.5Q116 90.5 116 86" fill="none" stroke="#e2a417" stroke-width="1.2"/></svg><svg style="left:212px;top:0px" width="117" height="91" viewBox="0 0 117 91" ><defs><linearGradient id="fg11" x1="0" y1="0" x2="1" y2="1"><stop offset="0" stop-color="#ffe397"/><stop offset="1" stop-color="#ffcb3a"/></linearGradient><linearGradient id="fg11b" x1="0" y1="0" x2="1" y2="0"><stop offset="0" stop-color="#f8e3ad"/><stop offset="1" stop-color="#f0d07e"/></linearGradient></defs><path d="M0 5Q0 0 5 0H39Q44 0 47 4L51 12.6H111.5Q116.5 12.6 116.5 17.6V86Q116.5 91 111.5 91H5Q0 91 0 86Z" fill="#f5b823"/><rect x="3.7" y="16.7" width="107.6" height="45" rx="2" fill="url(#fg11b)"/><path d="M37 23H69L80.5 34.5V62H37Z" fill="#f8f8f8" stroke="#c4c4c4" stroke-width="0.7"/><path d="M69 23V34.5H80.5Z" fill="#e2e2e2" stroke="#c4c4c4" stroke-width="0.7"/><path d="M0 60Q0 55.2 5 55.2H39Q42 55.2 45 52.2Q48 49.2 52 49.2H111.5Q116.5 49.2 116.5 54.2V86Q116.5 91 111.5 91H5Q0 91 0 86Z" fill="url(#fg11)"/><path d="M0.5 86Q0.5 90.5 5 90.5H111.5Q116 90.5 116 86" fill="none" stroke="#e2a417" stroke-width="1.2"/></svg><svg style="left:387px;top:0px" width="117" height="91" viewBox="0 0 117 91" ><defs><linearGradient id="fg12" x1="0" y1="0" x2="1" y2="1"><stop offset="0" stop-color="#ffe397"/><stop offset="1" stop-color="#ffcb3a"/></linearGradient><linearGradient id="fg12b" x1="0" y1="0" x2="1" y2="0"><stop offset="0" stop-color="#f8e3ad"/><stop offset="1" stop-color="#f0d07e"/></linearGradient></defs><path d="M0 5Q0 0 5 0H39Q44 0 47 4L51 12.6H111.5Q116.5 12.6 116.5 17.6V86Q116.5 91 111.5 91H5Q0 91 0 86Z" fill="#f5b823"/><rect x="3.7" y="16.7" width="107.6" height="45" rx="2" fill="url(#fg12b)"/><path d="M37 23H69L80.5 34.5V62H37Z" fill="#f8f8f8" stroke="#c4c4c4" stroke-width="0.7"/><path d="M69 23V34.5H80.5Z" fill="#e2e2e2" stroke="#c4c4c4" stroke-width="0.7"/><path d="M0 60Q0 55.2 5 55.2H39Q42 55.2 45 52.2Q48 49.2 52 49.2H111.5Q116.5 49.2 116.5 54.2V86Q116.5 91 111.5 91H5Q0 91 0 86Z" fill="url(#fg12)"/><path d="M0.5 86Q0.5 90.5 5 90.5H111.5Q116 90.5 116 86" fill="none" stroke="#e2a417" stroke-width="1.2"/></svg><svg style="left:562px;top:0px" width="117" height="91" viewBox="0 0 117 91" ><defs><linearGradient id="fg13" x1="0" y1="0" x2="1" y2="1"><stop offset="0" stop-color="#ffe397"/><stop offset="1" stop-color="#ffcb3a"/></linearGradient><linearGradient id="fg13b" x1="0" y1="0" x2="1" y2="0"><stop offset="0" stop-color="#f8e3ad"/><stop offset="1" stop-color="#f0d07e"/></linearGradient></defs><path d="M0 5Q0 0 5 0H39Q44 0 47 4L51 12.6H111.5Q116.5 12.6 116.5 17.6V86Q116.5 91 111.5 91H5Q0 91 0 86Z" fill="#f5b823"/><rect x="3.7" y="16.7" width="107.6" height="45" rx="2" fill="url(#fg13b)"/><rect x="3.7" y="16.7" width="107.6" height="45" rx="2" fill="#ffffff"/><path d="M0 60Q0 55.2 5 55.2H39Q42 55.2 45 52.2Q48 49.2 52 49.2H111.5Q116.5 49.2 116.5 54.2V86Q116.5 91 111.5 91H5Q0 91 0 86Z" fill="url(#fg13)"/><path d="M0.5 86Q0.5 90.5 5 90.5H111.5Q116 90.5 116 86" fill="none" stroke="#e2a417" stroke-width="1.2"/></svg></div>
<div class="t" style="left:230px;top:287px;width:120px;text-align:center;font-size:15px;line-height:20px;color:#1a1a1a">11月图片</div>
<div class="t" style="left:405px;top:287px;width:120px;text-align:center;font-size:15px;line-height:20px;color:#1a1a1a">AJiaSu</div>
<div class="t" style="left:580px;top:287px;width:120px;text-align:center;font-size:15px;line-height:20px;color:#1a1a1a">Foxit HD</div>
<div class="t" style="left:755px;top:287px;width:120px;text-align:center;font-size:15px;line-height:20px;color:#1a1a1a">Foxit PDF<br>Converter</div>
<div class="a" style="left:0px;top:388px;width:942px;height:168px;background:#f9f9f9"></div>
<div class="t" style="left:-2px;top:408px;width:153px;text-align:right;font-size:15px;line-height:15px;color:#1a1a1a">文件名(<u>N</u>):</div>
<div class="t" style="left:-2px;top:439px;width:153px;text-align:right;font-size:15px;line-height:15px;color:#1a1a1a">保存类型(<u>T</u>):</div>
<div class="a" style="left:157px;top:401px;width:779px;height:28px;background:#fff;border:1.5px solid #1a6fbd;border-radius:2px"></div>
<div class="a" style="left:161px;top:404px;width:93px;height:20px;background:#0078d7"></div>
<div class="t" style="left:162px;top:407px;font-size:15px;line-height:15px;color:#fff">福昕办公.png</div>
<svg style="left:920px;top:412px" width="11" height="7" viewBox="0 0 11 7" ><path d="M0.8 0.8L5.5 5.8L10.2 0.8" fill="none" stroke="#555" stroke-width="1.2"/></svg>
<div class="a" style="left:157px;top:433px;width:779px;height:27px;background:#fbfbfb;border:1px solid #d5d5d5;border-radius:2px"></div>
<div class="t" style="left:162px;top:439px;font-size:15px;line-height:15px;color:#1a1a1a">PNG (*.png)</div>
<svg style="left:920px;top:443px" width="11" height="7" viewBox="0 0 11 7" ><path d="M0.8 0.8L5.5 5.8L10.2 0.8" fill="none" stroke="#555" stroke-width="1.2"/></svg>
<div class="a" style="left:158px;top:519px;width:167px;height:31px;background:#fdfdfd;border:1px solid #d0d0d0;border-radius:4px"></div>
<div class="t" style="left:210px;top:528px;font-size:15px;line-height:15px;color:#1a1a1a">设置(<u>G</u>)...</div>
<div class="a" style="left:439px;top:522px;width:16px;height:16px;background:#0a5fc0;border-radius:3px"></div>
<svg style="left:441px;top:525px" width="12" height="10" viewBox="0 0 12 10" ><path d="M1.5 5L4.5 8L10.5 2" fill="none" stroke="#fff" stroke-width="1.4"/></svg>
<div class="t" style="left:460px;top:521px;font-size:15px;line-height:15px;color:#1b64b4">打开目标文件夹(<u>O</u>)</div>
<div class="a" style="left:0px;top:556px;width:942px;height:77px;background:#f0f0f0"></div>
<svg style="left:14px;top:596px" width="11" height="7" viewBox="0 0 11 7" ><path d="M0.8 6L5.5 1.2L10.2 6" fill="none" stroke="#333" stroke-width="1.4"/></svg>
<div class="t" style="left:35px;top:592px;font-size:15px;line-height:15px;color:#1a1a1a">隐藏文件夹</div>
<div class="a" style="left:685px;top:580px;width:108px;height:31px;background:#fdfdfd;border:1.5px solid #1a6fbd;border-radius:4px"></div>
<div class="t" style="left:714px;top:588px;font-size:15px;line-height:15px;color:#1a1a1a">保存(<u>S</u>)</div>
<div class="a" style="left:810px;top:580px;width:108px;height:31px;background:#fdfdfd;border:1px solid #d0d0d0;border-radius:4px"></div>
<div class="t" style="left:849px;top:588px;font-size:15px;line-height:15px;color:#1a1a1a">取消</div>
<svg style="left:928px;top:619px" width="12" height="12" viewBox="0 0 12 12" ><rect x="8" y="0" width="3" height="3" fill="#a0a0a0"/><rect x="4" y="4" width="3" height="3" fill="#a0a0a0"/><rect x="8" y="4" width="3" height="3" fill="#a0a0a0"/><rect x="0" y="8" width="3" height="3" fill="#a0a0a0"/><rect x="4" y="8" width="3" height="3" fill="#a0a0a0"/><rect x="8" y="8" width="3" height="3" fill="#a0a0a0"/></svg>
</div>
</body></html>
